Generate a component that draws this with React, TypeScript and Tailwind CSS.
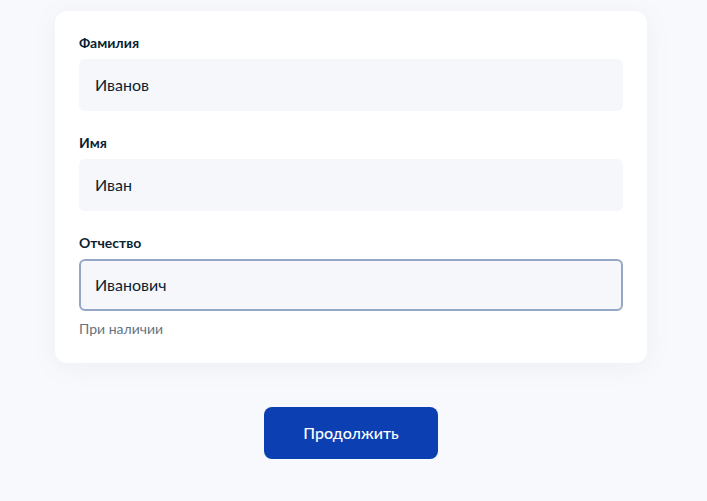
const fields = [
  { label: 'Фамилия', value: 'Иванов', focused: false, hint: '' },
  { label: 'Имя', value: 'Иван', focused: false, hint: '' },
  { label: 'Отчество', value: 'Иванович', focused: true, hint: 'При наличии' },
];

export default function App() {
  return (
    <div className="min-h-[501px] bg-[#f8f9fc] pt-[11px] pl-[55px]" style={{ fontFamily: 'Lato, "Noto Sans", sans-serif' }}>
      <div className="w-[592px]">
        {/* Form card */}
        <div className="rounded-xl bg-white p-6 shadow-[0_4px_24px_rgba(100,120,170,0.08)]">
          {fields.map((f, i) => (
            <div key={f.label} className={i > 0 ? 'mt-6' : ''}>
              <div className="mb-2 text-sm leading-4 font-bold text-[#0b1f33]">{f.label}</div>
              <div
                className={`flex h-[52px] items-center rounded-md bg-[#f5f7fa] px-4 text-base text-[#0b1f33] ${
                  f.focused ? 'border-2 border-[#95a7c6] px-[14px]' : ''
                }`}
              >
                {f.value}
              </div>
              {f.hint && <div className="mt-2 text-sm leading-5 text-[#66727f]">{f.hint}</div>}
            </div>
          ))}
        </div>

        {/* Continue */}
        <div className="mt-[44px] flex justify-center">
          <button className="h-[52px] w-[174px] rounded-lg bg-[#0c3fb1] text-base font-medium text-white">
            Продолжить
          </button>
        </div>
      </div>
    </div>
  );
}
